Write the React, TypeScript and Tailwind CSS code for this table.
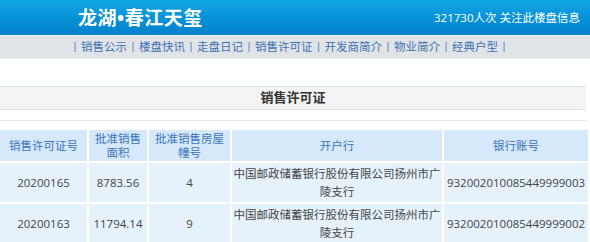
const NAV = ["销售公示", "楼盘快讯", "走盘日记", "销售许可证", "开发商简介", "物业简介", "经典户型"];

const ROWS = [
  { no: "20200165", area: "8783.56", bld: "4", bank: "中国邮政储蓄银行股份有限公司扬州市广陵支行", acct: "932002010085449999003" },
  { no: "20200163", area: "11794.14", bld: "9", bank: "中国邮政储蓄银行股份有限公司扬州市广陵支行", acct: "932002010085449999002" },
];

function Pipe() {
  return <span className="px-[4.5px] font-['Liberation_Sans'] text-[#5a86bf]">|</span>;
}

export default function App() {
  return (
    <div className="w-[590px] h-[242px] overflow-hidden bg-white font-['Open_Sans','Noto_Sans_CJK_SC',sans-serif]">
      {/* top banner */}
      <header className="h-[36px] flex items-center justify-between bg-gradient-to-b from-[#10a5e6] to-[#0381cb] border-b border-[#e8f3fa]">
        <h1 className="pl-[78px] pt-[2px] text-[19px] leading-none font-bold text-white tracking-[0.5px]">
          龙湖•春江天玺
        </h1>
        <div className="pr-[10px] text-[11.5px] leading-none text-white">
          321730人次 关注此楼盘信息
        </div>
      </header>

      {/* nav strip */}
      <nav className="h-[23px] flex items-center pl-[69px] bg-[#e1e4e7] border-b border-[#eceef0] text-[11.5px] leading-none text-[#3b71b5]">
        <Pipe />
        {NAV.map((item) => (
          <span key={item} className="flex items-center">
            <span>{item}</span>
            <Pipe />
          </span>
        ))}
      </nav>

      {/* section title */}
      <div className="mt-[27px] w-[586px] h-[24px] flex items-center justify-center bg-[#f4f4f4] border-y border-[#d6e2f2] text-[13px] font-bold text-[#333]">
        销售许可证
      </div>

      <div className="mt-[10px] w-[586px] border-t border-[#e3e8ef] pt-[9px]">
        <div className="grid grid-cols-[87px_58px_81px_210px_144px] gap-[2px] text-[11.5px] text-center">
          {/* header row */}
          <div className="h-[31px] flex items-center justify-center bg-[#d5e9fa] text-[#3a74bd] leading-[14px]">销售许可证号</div>
          <div className="h-[31px] flex items-center justify-center bg-[#d5e9fa] text-[#3a74bd] leading-[14px]">批准销售<br />面积</div>
          <div className="h-[31px] flex items-center justify-center bg-[#d5e9fa] text-[#3a74bd] leading-[14px]">批准销售房屋<br />幢号</div>
          <div className="h-[31px] flex items-center justify-center bg-[#d5e9fa] text-[#3a74bd] leading-[14px]">开户行</div>
          <div className="h-[31px] flex items-center justify-center bg-[#d5e9fa] text-[#3a74bd] leading-[14px]">银行账号</div>

          {ROWS.map((r) => (
            <div key={r.no} className="contents text-[#444]">
              <div className="h-[39px] flex items-center justify-center bg-[#e5f2fc]">{r.no}</div>
              <div className="h-[39px] flex items-center justify-center bg-[#e5f2fc]">{r.area}</div>
              <div className="h-[39px] flex items-center justify-center bg-[#e5f2fc]">{r.bld}</div>
              <div className="h-[39px] flex items-center justify-center bg-[#e5f2fc] px-[1px] leading-[18px]">{r.bank}</div>
              <div className="h-[39px] flex items-center justify-center bg-[#e5f2fc]">{r.acct}</div>
            </div>
          ))}
        </div>
      </div>
    </div>
  );
}
